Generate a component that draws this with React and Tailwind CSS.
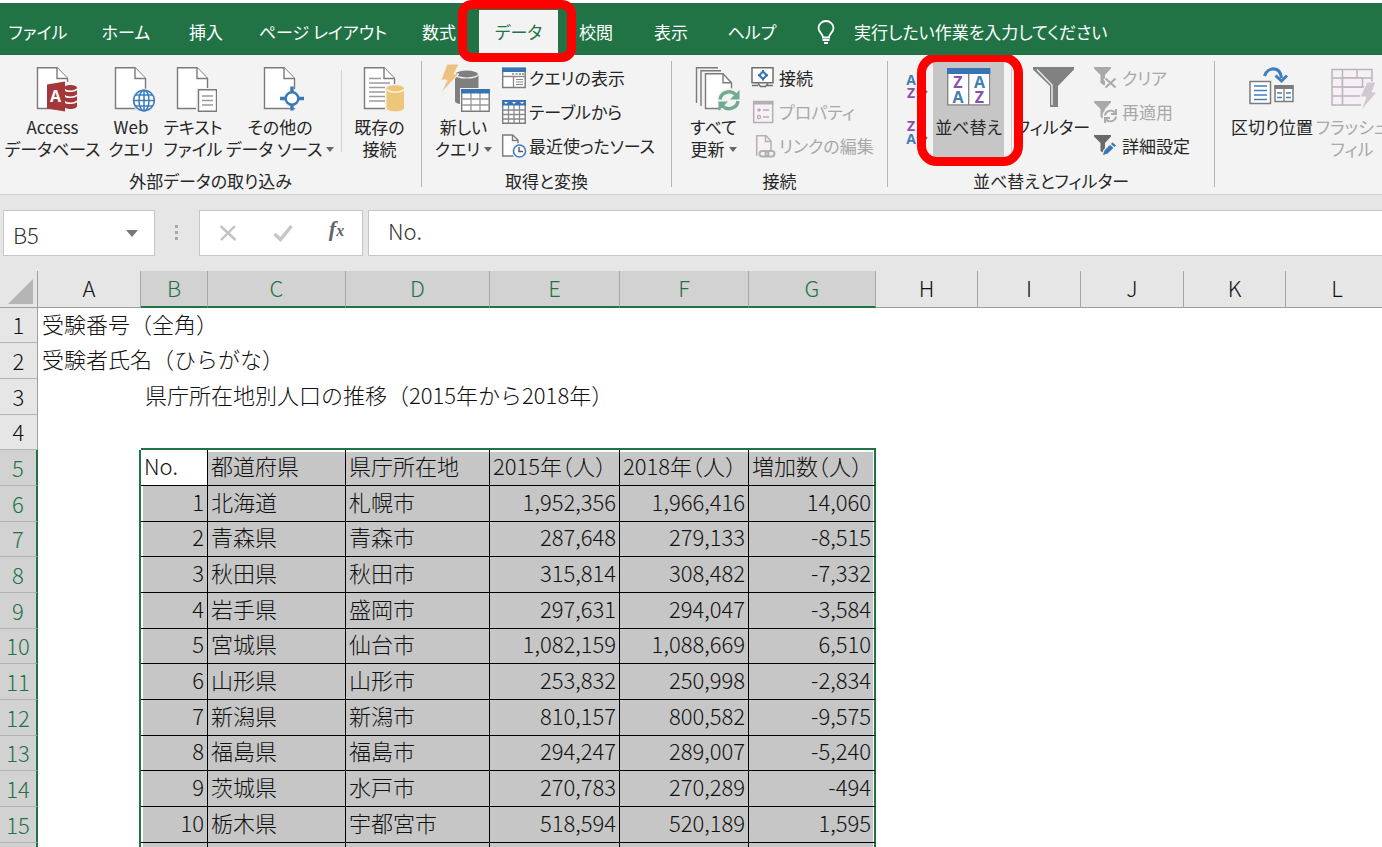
import { useState } from "react";

const tabs = [
  { label: "ファイル", width: "w-[76px]" },
  { label: "ホーム", width: "w-[100px]" },
  { label: "挿入", width: "w-[60px]" },
  { label: "ページ レイアウト", width: "w-[174px]" },
  { label: "数式", width: "w-[58px]" },
  { label: "データ", width: "w-[79px]" },
  { label: "校閲", width: "w-[76px]" },
  { label: "表示", width: "w-[74px]" },
  { label: "ヘルプ", width: "w-[88px]" },
];

const columns = [
  { name: "A", width: "w-[103px]" },
  { name: "B", width: "w-[67px]" },
  { name: "C", width: "w-[138px]" },
  { name: "D", width: "w-[144px]" },
  { name: "E", width: "w-[130px]" },
  { name: "F", width: "w-[129px]" },
  { name: "G", width: "w-[127px]" },
  { name: "H", width: "w-[102px]" },
  { name: "I", width: "w-[103px]" },
  { name: "J", width: "w-[103px]" },
  { name: "K", width: "w-[102px]" },
  { name: "L", width: "w-[103px]" },
];

const notes = {
  1: { col: "A", text: "受験番号（全角）" },
  2: { col: "A", text: "受験者氏名（ひらがな）" },
  3: { col: "B", text: "県庁所在地別人口の推移（2015年から2018年）" },
};

const data = {
  5: ["No.", "都道府県", "県庁所在地", "2015年（人）", "2018年（人）", "増加数（人）"],
  6: ["1", "北海道", "札幌市", "1,952,356", "1,966,416", "14,060"],
  7: ["2", "青森県", "青森市", "287,648", "279,133", "-8,515"],
  8: ["3", "秋田県", "秋田市", "315,814", "308,482", "-7,332"],
  9: ["4", "岩手県", "盛岡市", "297,631", "294,047", "-3,584"],
  10: ["5", "宮城県", "仙台市", "1,082,159", "1,088,669", "6,510"],
  11: ["6", "山形県", "山形市", "253,832", "250,998", "-2,834"],
  12: ["7", "新潟県", "新潟市", "810,157", "800,582", "-9,575"],
  13: ["8", "福島県", "福島市", "294,247", "289,007", "-5,240"],
  14: ["9", "茨城県", "水戸市", "270,783", "270,289", "-494"],
  15: ["10", "栃木県", "宇都宮市", "518,594", "520,189", "1,595"],
};

const rowNumbers = Array.from({ length: 16 }, (_, i) => i + 1);
const SELECTED = "BCDEFG";

/* ---------- icons ---------- */

function BigIcon({ children, wide }) {
  return (
    <svg className={wide ? "w-[52px] h-12 shrink-0" : "w-12 h-12 shrink-0"} viewBox={wide ? "0 0 52 48" : "0 0 48 48"} fill="none" aria-hidden="true">
      {children}
    </svg>
  );
}

function SmallIcon({ children }) {
  return (
    <svg className="w-[26px] h-6 shrink-0" viewBox="0 0 26 24" fill="none" aria-hidden="true">
      {children}
    </svg>
  );
}

function Doc() {
  return (
    <g stroke="#7b7b7b" strokeWidth="1.4">
      <path d="M8.5 3.7H28L38.5 14.5V44.5H8.5Z" fill="#fff" />
      <path d="M28 3.7V14.5H38.5" fill="#fff" />
    </g>
  );
}

function AccessIcon() {
  return (
    <BigIcon>
      <Doc />
      <path d="M34 18h15v30H34z" fill="#f3f3f3" />
      <path d="M35 24c0-4 13-4 13 0v18c0 4-13 4-13 0z" fill="#a4373a" />
      <path d="M35 25c2 3 11 3 13 0M35 31c2 3 11 3 13 0M35 37c2 3 11 3 13 0" stroke="#fff" strokeWidth="1.7" />
      <path d="M18 20.5 36 17.5V47.5L18 44.5Z" fill="#a4373a" />
      <text x="26.5" y="38" fontSize="16" fontWeight="700" fill="#fff" textAnchor="middle" fontFamily="Open Sans, sans-serif">A</text>
    </BigIcon>
  );
}

function WebIcon() {
  return (
    <BigIcon>
      <Doc />
      <circle cx="37" cy="36.5" r="12" fill="#f3f3f3" />
      <g stroke="#3f7fbf" strokeWidth="1.6">
        <circle cx="37" cy="36.5" r="10.3" fill="#fff" />
        <ellipse cx="37" cy="36.5" rx="5" ry="10.3" />
        <path d="M37 26v21M27 36.5h20M28.8 31h16.4M28.8 42h16.4" />
      </g>
    </BigIcon>
  );
}

function TextFileIcon() {
  return (
    <BigIcon>
      <Doc />
      <path d="M27 24h22v24H27z" fill="#f3f3f3" />
      <path d="M29.5 25.7h18v21.5h-18z" fill="#fff" stroke="#7b7b7b" strokeWidth="1.4" />
      <path d="M33 32h11M33 36.5h11M33 41h11" stroke="#9a9a9a" strokeWidth="1.3" />
    </BigIcon>
  );
}

function OtherSourceIcon() {
  return (
    <BigIcon>
      <Doc />
      <circle cx="36" cy="34.5" r="10" fill="#f3f3f3" />
      <circle cx="36" cy="34.5" r="6.3" fill="#fff" stroke="#3a78b8" strokeWidth="2.4" />
      <path d="M36 22.5v6M36 40.5v6M24 34.5h6M42 34.5h6" stroke="#3a78b8" strokeWidth="3.4" />
    </BigIcon>
  );
}

function ExistingIcon() {
  return (
    <BigIcon>
      <Doc />
      <path d="M13 14.5h12M13 19h21M13 23.5h21M13 28h21M13 32.5h21M13 37h21" stroke="#9b9b9b" strokeWidth="1.3" />
      <path d="M29 20h19v28H29z" fill="#f3f3f3" />
      <path d="M30.5 24.5c0-4.500 17.500-4.500 17.500 0V44c0 4.500-17.500 4.500-17.500 0z" fill="#eec679" />
      <path d="M31 25.5c3 3.500 14 3.500 17 0" stroke="#fff5dc" strokeWidth="1.4" />
    </BigIcon>
  );
}

function NewQueryIcon() {
  return (
    <BigIcon wide>
      <path d="M17 10h23.5v27c0 5-23.500 5-23.500 0z" fill="#7f7f7f" />
      <ellipse cx="28.7" cy="10" rx="11.8" ry="4" fill="#7f7f7f" stroke="#f3f3f3" strokeWidth="1.2" />
      <path d="M9 0h12l-5 10h5L3 29l6-13H3z" fill="#ebc27f" stroke="#f3f3f3" strokeWidth="1" />
      <path d="M22 24h30v24H22z" fill="#f3f3f3" />
      <path d="M23.7 25.7h27.5v21.5H23.7z" fill="#fff" stroke="#7b7b7b" strokeWidth="1.4" />
      <path d="M23.7 35h27.5M23.7 41h27.5M33 29v18M42 29v18" stroke="#9a9a9a" strokeWidth="1.3" />
      <path d="M23 25h29v4.500H23z" fill="#3a73b4" />
    </BigIcon>
  );
}

function RefreshAllIcon() {
  return (
    <BigIcon wide>
      <g stroke="#7b7b7b" strokeWidth="1.4">
        <path d="M8.5 39V3.7H30M13 42V6.7H33" />
        <path d="M17.5 9.7H35l8.500 9V44.5h-26z" fill="#fff" />
        <path d="M35 9.7v9h8.500" />
      </g>
      <circle cx="41" cy="36" r="12" fill="#f3f3f3" />
      <g stroke="#70ab91" strokeWidth="3.4">
        <path d="M32 35.5a9 8.500 0 0 1 15.500-5" />
        <path d="M50 37a9 8.500 0 0 1-15.500 5" />
      </g>
      <path d="M51.5 26v9.500H42zM30.5 47v-9.500H40z" fill="#70ab91" />
    </BigIcon>
  );
}

function SortIcon() {
  return (
    <BigIcon>
      <path d="M2 4h43.500v38H2z" fill="#fff" />
      <path d="M2.7 10v31h42V10M23.7 10v31" stroke="#858585" strokeWidth="1.4" />
      <path d="M2 4h43.500v6H2z" fill="#3a73b4" />
      <g fontSize="16" fontWeight="700" textAnchor="middle" fontFamily="Open Sans, sans-serif">
        <text x="13" y="24" fill="#8b4fb0">Z</text>
        <text x="13" y="39" fill="#3f7fb8">A</text>
        <text x="34.5" y="24" fill="#3f7fb8">A</text>
        <text x="34.5" y="39" fill="#8b4fb0">Z</text>
      </g>
    </BigIcon>
  );
}

function QuickSortIcon({ reverse }) {
  return (
    <svg className="w-6 h-7" viewBox="0 0 24 28" fill="none" aria-hidden="true">
      <g fontSize="14" fontWeight="700" textAnchor="middle" fontFamily="Open Sans, sans-serif">
        <text x="5" y="12" fill={reverse ? "#8b4fb0" : "#3f7fb8"}>{reverse ? "Z" : "A"}</text>
        <text x="5" y="25" fill={reverse ? "#3f7fb8" : "#8b4fb0"}>{reverse ? "A" : "Z"}</text>
      </g>
      <path d="M16 2v21M11 18l5 6 5-6" stroke="#6d6d6d" strokeWidth="2" />
    </svg>
  );
}

function FilterIcon() {
  return (
    <BigIcon>
      <path d="M4 3h41v2.500L29 22v21h-8V22L4 5.500z" fill="#818181" />
      <path d="M8 5.5 23 21v20" stroke="#e8e8e8" strokeWidth="1.5" />
    </BigIcon>
  );
}

function SplitIcon() {
  return (
    <BigIcon>
      <path d="M2 17.5h20.500v22H2z" fill="#fff" stroke="#7b7b7b" strokeWidth="1.5" />
      <path d="M6 22h13M6 26.5h13M6 31h13M6 35.5h13" stroke="#3f7fbf" strokeWidth="1.7" />
      <path d="M27 22h18v15.500H27z" fill="#fff" stroke="#7b7b7b" strokeWidth="1.5" />
      <path d="M26.5 21h19v4h-19z" fill="#7b7b7b" />
      <path d="M36 24v13" stroke="#7b7b7b" strokeWidth="1.3" />
      <path d="M29 29h5M38 29h5M29 33.5h5M38 33.5h5" stroke="#3f7fbf" strokeWidth="1.7" />
      <path d="M16.5 12C20 2.500 32 2 33.500 14" stroke="#3f7fbf" strokeWidth="3.2" />
      <path d="M27.5 11.500 33.500 17l5.500-5.500" stroke="#3f7fbf" strokeWidth="3" />
    </BigIcon>
  );
}

function FlashFillIcon() {
  return (
    <BigIcon>
      <path d="M4 5.500h40v35.500H4z" fill="#f6f0f6" />
      <path d="M4 5.500h40V14H4zM4 23v18h29M4 23h40M4 32h32M14.500 5.500V41M29 5.500V14M44 14v7M4 14v9" stroke="#b9b5b9" strokeWidth="1.5" />
      <path d="M14.500 14h20v9h-20z" fill="#f6f0f6" stroke="#b9b5b9" strokeWidth="1.5" />
      <path d="M39 18h9l-4 10h5L33 47l5-14h-6z" fill="#cfcacf" stroke="#f3f3f3" strokeWidth="1" />
    </BigIcon>
  );
}

function ShowQueryIcon() {
  return (
    <SmallIcon>
      <path d="M1.7 2.500h22.500v19H1.7z" fill="#fff" stroke="#7b7b7b" strokeWidth="1.4" />
      <path d="M1 1.500h24v4.500H1z" fill="#3a73b4" />
      <path d="M11 8h2M14.500 8h2M18 8h2M21 8h2M1.7 10.500h22.500M12.500 10.500V21" stroke="#8a8a8a" strokeWidth="1.3" />
      <path d="M15 13.500h7M15 16h7M15 18.500h7" stroke="#8a8a8a" strokeWidth="1.2" />
    </SmallIcon>
  );
}

function FromTableIcon() {
  return (
    <SmallIcon>
      <path d="M1.7 1h22.500v22.300H1.7z" fill="#fff" stroke="#7b7b7b" strokeWidth="1.4" />
      <path d="M1.7 10h22.500M1.7 14.500h22.500M1.7 19h22.500M7.500 5v18M13 5v18M18.500 5v18" stroke="#8a8a8a" strokeWidth="1.3" />
      <path d="M1 0h24v5.500H1z" fill="#3a73b4" />
      <path d="M3 2h4L5 4zM11 2h4l-2 2zM19 2h4l-2 2z" fill="#fff" />
    </SmallIcon>
  );
}

function RecentIcon() {
  return (
    <SmallIcon>
      <path d="M1.7 1h10L17 6v16H1.7z" fill="#fff" stroke="#7b7b7b" strokeWidth="1.4" />
      <path d="M11.500 1v5.500H17" stroke="#7b7b7b" strokeWidth="1.4" />
      <circle cx="18.500" cy="17" r="8" fill="#f3f3f3" />
      <circle cx="18.500" cy="17" r="6" fill="#fff" stroke="#3f7fbf" strokeWidth="1.6" />
      <path d="M18 13v4.500h4" stroke="#555" strokeWidth="1.4" />
    </SmallIcon>
  );
}

function ConnectionIcon() {
  return (
    <SmallIcon>
      <path d="M1 1.700h21v15H1z" fill="#fff" stroke="#6f6f6f" strokeWidth="1.5" />
      <path d="M1 19.500h6M16 19.500h6M7 17.500l2.500 3h5l2.500-3" stroke="#6f6f6f" strokeWidth="1.5" />
      <path d="m12 5.500 3.700 3.700L12 13 8.300 9.200z" stroke="#3a73b4" strokeWidth="2" />
      <path d="M12 4v2M12 12.500v2M7 9.200h2M15 9.200h2" stroke="#3a73b4" strokeWidth="2" />
    </SmallIcon>
  );
}

function PropertyIcon() {
  return (
    <SmallIcon>
      <path d="M2.700 1.500h19v21h-19z" fill="#f7f1f7" stroke="#b3afb3" strokeWidth="1.5" />
      <path d="M2 1h20.500v3.500H2z" fill="#b3afb3" />
      <circle cx="8" cy="10" r="1.8" fill="#b3afb3" />
      <circle cx="8" cy="17" r="1.6" stroke="#b3afb3" strokeWidth="1.3" />
      <path d="M12 10h6M12 17h6" stroke="#b3afb3" strokeWidth="1.5" />
    </SmallIcon>
  );
}

function EditLinkIcon() {
  return (
    <SmallIcon>
      <path d="M5.700 22V1.700H15L20 7v9" fill="#f7f1f7" stroke="#b3afb3" strokeWidth="1.5" />
      <path d="M14.500 2v5.500H20" stroke="#b3afb3" strokeWidth="1.5" />
      <g stroke="#b0b0b0" strokeWidth="2">
        <rect x="8.5" y="17" width="9" height="5.5" rx="2.7" />
        <rect x="14.5" y="17" width="9" height="5.5" rx="2.7" />
      </g>
    </SmallIcon>
  );
}

function ClearIcon() {
  return (
    <SmallIcon>
      <path d="M0 1h17v1.500L11 9v11l-4.500-3V9L0 2.500z" fill="#a9a9a9" />
      <path d="m11 12 11 10M22 12 11 22" stroke="#f3f3f3" strokeWidth="5" />
      <path d="m11.500 12.500 10 9M21.500 12.500l-10 9" stroke="#a9a9a9" strokeWidth="2" />
    </SmallIcon>
  );
}

function ReapplyIcon() {
  return (
    <SmallIcon>
      <path d="M0 1h17v1.500L11 9v11l-4.500-3V9L0 2.500z" fill="#a9a9a9" />
      <circle cx="16.5" cy="16" r="8" fill="#f3f3f3" />
      <path d="M11 15.500a5.700 5.300 0 0 1 10-3M22 16.500a5.700 5.300 0 0 1-10 3" stroke="#a9a9a9" strokeWidth="1.9" />
      <path d="M22 9v5h-5M11 23v-5h5" stroke="#a9a9a9" strokeWidth="1.9" />
    </SmallIcon>
  );
}

function AdvancedIcon() {
  return (
    <SmallIcon>
      <path d="M0 1h17v1.500L11 9v11l-4.500-3V9L0 2.500z" fill="#6a6a6a" />
      <path d="m8 22 2-6L18.500 7.500l4.500 4L14 20z" fill="#3a78b8" stroke="#f3f3f3" strokeWidth="1.2" />
      <path d="m16 10 4.500 4" stroke="#f3f3f3" strokeWidth="1.2" />
    </SmallIcon>
  );
}

function Caret() {
  return (
    <svg className="inline-block w-2 h-[5px] ml-1 mb-[3px]" viewBox="0 0 8 5" aria-hidden="true">
      <path d="M0 0h8L4 5z" fill="#666" />
    </svg>
  );
}

/* ---------- ribbon ---------- */

function BigButton({ icon, lines, width, caret, active, disabled }) {
  return (
    <button
      type="button"
      disabled={disabled}
      className={`${width} shrink-0 mt-px h-[95px] pt-[2px] flex flex-col items-center whitespace-nowrap leading-[22px] ${active ? "bg-[#c6c6c6]" : ""} ${disabled ? "text-[#a8a8a8]" : ""}`}
    >
      {icon}
      <span className="mt-1">{lines[0]}</span>
      {lines[1] && <span>{lines[1]}{caret && <Caret />}</span>}
    </button>
  );
}

function SmallButton({ icon, label, disabled }) {
  return (
    <button type="button" disabled={disabled} className={`h-[34px] flex items-center gap-[2px] whitespace-nowrap ${disabled ? "text-[#a8a8a8]" : ""}`}>
      {icon}
      <span>{label}</span>
    </button>
  );
}

function Group({ label, width, children }) {
  return (
    <section className="flex shrink-0 pt-[6px]">
      <div className={`${width} flex flex-col`}>
        <div className="flex h-[102px]">{children}</div>
        <div className="mt-[7px] text-center leading-[22px]">{label}</div>
      </div>
      <div className="w-px h-[126px] bg-[#b5b5b5]" />
    </section>
  );
}

function Ribbon() {
  return (
    <div className="flex h-[140px] overflow-hidden bg-[#f3f3f3] border-b border-[#d0d0d0] text-[#262626]">
      <Group label="外部データの取り込み" width="w-[421px]">
        <BigButton icon={<AccessIcon />} lines={["Access", "データベース"]} width="w-[105px]" />
        <BigButton icon={<WebIcon />} lines={["Web", "クエリ"]} width="w-[52px]" />
        <BigButton icon={<TextFileIcon />} lines={["テキスト", "ファイル"]} width="w-[72px]" />
        <BigButton icon={<OtherSourceIcon />} lines={["その他の", "データ ソース"]} width="w-[102px]" caret />
        <div className="ml-[10px] mt-[9px] w-px h-[82px] bg-[#d0d0d0]" />
        <BigButton icon={<ExistingIcon />} lines={["既存の", "接続"]} width="w-[75px]" />
      </Group>
      <Group label="取得と変換" width="w-[249px]">
        <div className="ml-1 flex">
          <BigButton icon={<NewQueryIcon />} lines={["新しい", "クエリ"]} width="w-[75px]" caret />
        </div>
        <div className="flex flex-col">
          <SmallButton icon={<ShowQueryIcon />} label="クエリの表示" />
          <SmallButton icon={<FromTableIcon />} label="テーブルから" />
          <SmallButton icon={<RecentIcon />} label="最近使ったソース" />
        </div>
      </Group>
      <Group label="接続" width="w-[215px]">
        <div className="ml-1 flex">
          <BigButton icon={<RefreshAllIcon />} lines={["すべて", "更新"]} width="w-[75px]" caret />
        </div>
        <div className="flex flex-col">
          <SmallButton icon={<ConnectionIcon />} label="接続" />
          <SmallButton icon={<PropertyIcon />} label="プロパティ" disabled />
          <SmallButton icon={<EditLinkIcon />} label="リンクの編集" disabled />
        </div>
      </Group>
      <Group label="並べ替えとフィルター" width="w-[326px]">
        <div className="ml-[18px] mt-3 w-[27px] flex flex-col gap-[18px]">
          <button type="button" aria-label="昇順"><QuickSortIcon /></button>
          <button type="button" aria-label="降順"><QuickSortIcon reverse /></button>
        </div>
        <div className="relative">
          <BigButton icon={<SortIcon />} lines={["並べ替え"]} width="w-[71px]" active />
          <div className="absolute z-10 -left-4 -right-[19px] -top-2 -bottom-[3px] rounded-[20px] border-[9px] border-[#fe0000] pointer-events-none" />
        </div>
        <div className="ml-[7px] mt-2 w-px h-[86px] bg-[#d0d0d0]" />
        <BigButton icon={<FilterIcon />} lines={["フィルター"]} width="w-[82px]" />
        <div className="flex flex-col">
          <SmallButton icon={<ClearIcon />} label="クリア" disabled />
          <SmallButton icon={<ReapplyIcon />} label="再適用" disabled />
          <SmallButton icon={<AdvancedIcon />} label="詳細設定" />
        </div>
      </Group>
      <div className="flex pt-[6px] pl-3">
        <BigButton icon={<SplitIcon />} lines={["区切り位置"]} width="w-[90px]" />
        <BigButton icon={<FlashFillIcon />} lines={["フラッシュ", "フィル"]} width="w-[70px]" disabled />
      </div>
    </div>
  );
}

function TabBar({ active, onSelect }) {
  return (
    <nav className="mt-[3px] h-[52px] flex items-stretch bg-[#217346] text-white">
      {tabs.map((tab) => (
        <div key={tab.label} className={`relative flex shrink-0 pt-[7px] ${tab.label === "データ" ? "ml-[11px]" : ""}`}>
          <button
            type="button"
            onClick={() => onSelect(tab.label)}
            className={`${tab.width} pb-[2px] whitespace-nowrap ${active === tab.label ? "bg-[#f3f3f3] text-[#217346]" : ""}`}
          >
            {tab.label}
          </button>
          {active === tab.label && (
            <div className="absolute z-10 -left-[21px] -right-[18px] -top-[3px] -bottom-[7px] rounded-[14px] border-[9px] border-[#fe0000] pointer-events-none" />
          )}
        </div>
      ))}
      <button type="button" className="ml-5 pt-[5px] flex items-center gap-[18px] whitespace-nowrap">
        <svg className="w-5 h-6" viewBox="0 0 20 24" fill="none" stroke="#fff" strokeWidth="1.8" aria-hidden="true">
          <path d="M7 17.500c0-4-4.500-5-4.500-9.500a7.500 7 0 0 1 15 0c0 4.500-4.500 5.500-4.500 9.500z" />
          <path d="M6.500 20h7M8 23h4" />
        </svg>
        実行したい作業を入力してください
      </button>
    </nav>
  );
}

/* ---------- formula bar and sheet ---------- */

function FormulaBar() {
  return (
    <div className="flex items-start pt-[15px] pl-[3px] h-[76px] text-[22px] text-[#333] font-light">
      <div className="w-[152px] h-[46px] flex items-center shrink-0 bg-white border border-[#c6c6c6] pr-4">
        <input aria-label="名前ボックス" defaultValue="B5" className="w-full min-w-0 h-full pt-[2px] pl-[9px] bg-transparent outline-none" />
        <svg className="w-3 h-[7px] shrink-0" viewBox="0 0 12 7" aria-hidden="true"><path d="M0 0h12L6 7z" fill="#777" /></svg>
      </div>
      <svg className="w-11 h-[46px] shrink-0" viewBox="0 0 44 46" aria-hidden="true">
        <path d="M20 15h3v3h-3zM20 21h3v3h-3zM20 27h3v3h-3z" fill="#a8a8a8" />
      </svg>
      <div className="w-[164px] h-[46px] shrink-0 flex items-center justify-around bg-white border border-[#c6c6c6]">
        <button type="button" aria-label="キャンセル">
          <svg className="w-5 h-5" viewBox="0 0 20 20" fill="none" stroke="#c2c2c2" strokeWidth="2.4"><path d="m2.500 3 15 14M17 3 3 17" /></svg>
        </button>
        <button type="button" aria-label="入力">
          <svg className="w-5 h-5" viewBox="0 0 20 20" fill="none" stroke="#c6c6c6" strokeWidth="3.4"><path d="m1.500 11 6 5.500L18.500 3" /></svg>
        </button>
        <button type="button" aria-label="関数の挿入" className="font-['Liberation_Serif',serif] italic font-bold text-[#666] leading-5 pb-1">
          f<span className="text-base">x</span>
        </button>
      </div>
      <input aria-label="数式バー" defaultValue="No." className="ml-[5px] grow min-w-0 h-[46px] pl-[19px] pb-[6px] bg-white border border-r-0 border-[#c6c6c6] outline-none" />
    </div>
  );
}

function cellClass(row, name) {
  const inRange = row >= 5 && SELECTED.includes(name);
  if (!inRange) {
    const indent = name === "A" || name === "B" ? "pl-1" : "";
    if (row >= 5 && name === "A") return "border-r-2 border-[#217346]";
    if (row === 4 && SELECTED.includes(name)) return "border-b-2 border-[#217346]";
    return indent;
  }
  const base = "px-[3px] border-b border-b-black";
  const fill = row === 5 && name === "B" ? "bg-white" : "bg-[#c6c6c6]";
  const right = name === "G" ? "border-r-2 border-r-[#217346]" : "border-r border-r-black";
  const align = row > 5 && name !== "C" && name !== "D" ? "text-right" : "text-left";
  let edge = "";
  if (row === 5) edge = name === "G" ? "shadow-[inset_-1px_2px_0_#fff]" : "shadow-[inset_0_2px_0_#fff]";
  else if (name === "B") edge = "shadow-[inset_2px_0_0_#fff]";
  else if (name === "G") edge = "shadow-[inset_-1px_0_0_#fff]";
  const half = row === 5 ? "[font-feature-settings:'halt']" : "";
  return `${base} ${fill} ${right} ${align} ${edge} ${half}`;
}

function cellText(row, name) {
  if (notes[row]) return notes[row].col === name ? notes[row].text : "";
  if (data[row]) return data[row][SELECTED.indexOf(name)] ?? "";
  return "";
}

function Sheet() {
  return (
    <table className="table-fixed w-full border-separate border-spacing-0 bg-white text-[22px] leading-[26px] text-[#111] font-light">
      <colgroup>
        <col className="w-[38px]" />
        {columns.map((c) => <col key={c.name} className={c.width} />)}
      </colgroup>
      <thead>
        <tr className="h-[37px]">
          <th className="p-0 bg-[#e6e6e6] border-b border-r border-[#9f9f9f]">
            <svg className="w-[25px] h-[25px] ml-2 mt-[5px]" viewBox="0 0 25 25" aria-hidden="true"><path d="M25 0v25H0z" fill="#b4b4b4" /></svg>
          </th>
          {columns.map((c) => (
            <th
              key={c.name}
              className={`p-0 pb-1 font-light border-r border-r-[#a6a6a6] ${SELECTED.includes(c.name) ? "bg-[#d2d2d2] text-[#217346] border-b-2 border-b-[#217346]" : "bg-[#e6e6e6] border-b border-b-[#9f9f9f]"}`}
            >
              {c.name}
            </th>
          ))}
        </tr>
      </thead>
      <tbody>
        {rowNumbers.map((row) => (
          <tr key={row} className={row % 3 === 1 ? "h-[35px]" : "h-9"}>
            <th className={`p-0 pb-[2px] font-light border-b border-b-[#b4b4b4] ${row >= 5 ? "bg-[#d2d2d2] text-[#217346] border-r-2 border-r-[#217346]" : "bg-[#e6e6e6] border-r border-r-[#9f9f9f]"}`}>
              {row < 16 ? row : ""}
            </th>
            {columns.map((c) => (
              <td key={c.name} className={`pt-0 pb-[6px] whitespace-nowrap ${cellClass(row, c.name)}`}>
                {cellText(row, c.name)}
              </td>
            ))}
          </tr>
        ))}
      </tbody>
    </table>
  );
}

export default function App() {
  const [activeTab, setActiveTab] = useState("データ");

  return (
    <div className="h-screen overflow-hidden flex flex-col bg-white font-['Noto_Sans_CJK_JP',sans-serif]">
      <div className="shrink-0 text-[17px] [font-feature-settings:'palt']">
        <TabBar active={activeTab} onSelect={setActiveTab} />
        <Ribbon />
      </div>
      <div className="shrink-0 bg-[#e6e6e6]">
        <FormulaBar />
      </div>
      <div className="grow min-h-0 overflow-hidden">
        <Sheet />
      </div>
    </div>
  );
}
